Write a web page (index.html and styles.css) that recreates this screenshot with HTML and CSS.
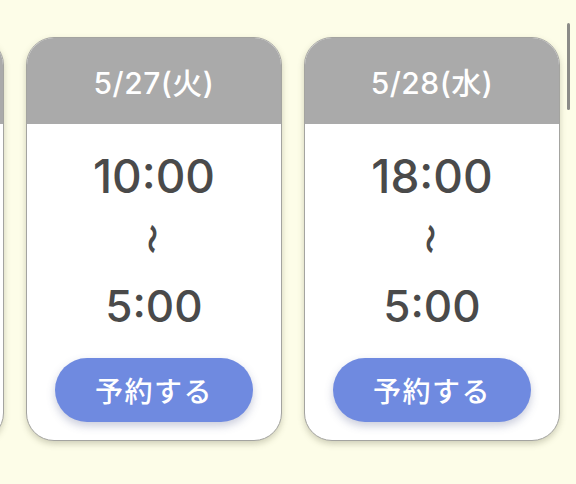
FILE: index.html
```html
<!DOCTYPE html>
<html lang="ja">
<head>
<meta charset="utf-8">
<link rel="stylesheet" href="styles.css">
</head>
<body>
<div class="viewport">
  <div class="row">
    <div class="card" aria-hidden="true">
      <div class="card-head"></div>
      <div class="card-body"></div>
    </div>
    <div class="card">
      <div class="card-head">5/27(火)</div>
      <div class="card-body">
        <div class="time">10:00</div>
        <div class="tilde"><span>〜</span></div>
        <div class="time time-end">5:00</div>
        <button class="reserve">予約する</button>
      </div>
    </div>
    <div class="card">
      <div class="card-head">5/28(水)</div>
      <div class="card-body">
        <div class="time">18:00</div>
        <div class="tilde"><span>〜</span></div>
        <div class="time time-end">5:00</div>
        <button class="reserve">予約する</button>
      </div>
    </div>
  </div>
  <div class="scrollbar"></div>
</div>
</body>
</html>
```
FILE: styles.css
```css
html, body {
  margin: 0;
  padding: 0;
}
body {
  background: #fdfde8;
  font-family: Inter, "Noto Sans CJK JP", sans-serif;
  width: 576px;
  height: 484px;
  overflow: hidden;
}
.viewport {
  position: relative;
  width: 576px;
  height: 484px;
  overflow: hidden;
}
.row {
  display: flex;
  gap: 22px;
  padding-top: 37px;
  margin-left: -252px;
}
.card {
  flex: 0 0 256px;
  height: 404px;
  box-sizing: border-box;
  border: 1.5px solid #a4a4a0;
  border-radius: 28px;
  background: #ffffff;
  overflow: hidden;
  display: flex;
  flex-direction: column;
  box-shadow: 0 3px 6px rgba(90, 90, 60, 0.28);
}
.card-head {
  height: 86px;
  flex: 0 0 86px;
  background: #aaaaaa;
  color: #ffffff;
  font-size: 30px;
  font-weight: 500;
  letter-spacing: 0.5px;
  display: flex;
  align-items: center;
  justify-content: center;
}
.card-body {
  flex: 1;
  display: flex;
  flex-direction: column;
  align-items: center;
  padding-top: 22px;
}
.time {
  height: 60px;
  line-height: 60px;
  font-size: 46px;
  font-weight: 500;
  color: #4a4a4a;
}
.time-end {
  height: 66px;
  line-height: 68px;
  font-size: 44px;
}
.tilde {
  height: 66px;
  display: flex;
  align-items: center;
  justify-content: center;
  color: #4a4a4a;
  font-family: "Noto Sans CJK JP", sans-serif;
  font-size: 30px;
  font-weight: 900;
}
.tilde span {
  display: inline-block;
  transform: rotate(90deg) scaleY(0.75);
}
.reserve {
  margin-top: 20px;
  width: 198px;
  height: 64px;
  border: none;
  border-radius: 32px;
  background: #6f8ae0;
  color: #ffffff;
  font-family: "Noto Sans CJK JP", sans-serif;
  font-size: 28px;
  font-weight: 500;
  letter-spacing: 1.5px;
  box-shadow: 0 4px 8px rgba(80, 90, 140, 0.3);
  padding: 0;
}
.scrollbar {
  position: absolute;
  left: 567px;
  top: 23px;
  width: 3px;
  height: 87px;
  border-radius: 2px;
  background: #8c8c88;
}
```
